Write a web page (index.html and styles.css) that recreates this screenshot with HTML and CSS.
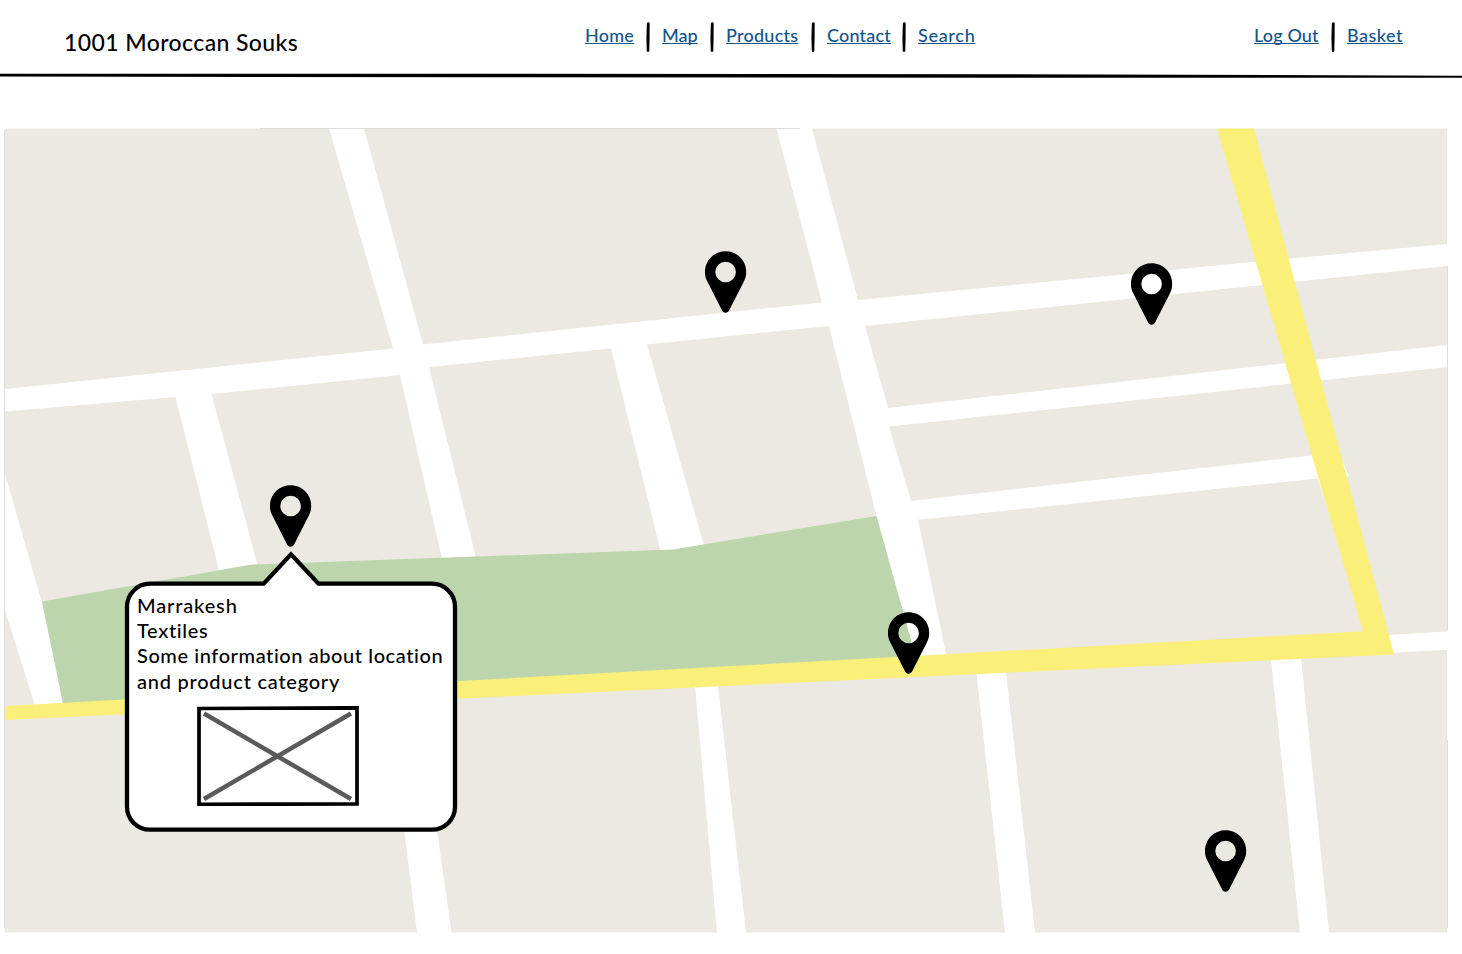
FILE: index.html
```html
<!DOCTYPE html>
<html lang="en">
<head>
<meta charset="utf-8">
<title>1001 Moroccan Souks</title>
<link rel="stylesheet" href="styles.css">
</head>
<body>
<svg class="defs" aria-hidden="true">
  <symbol id="pin" viewBox="0 0 42 62">
    <path fill-rule="evenodd" d="M21 .3C9.500.3.3 9.500.3 21c0 3.500.8 6.400 2.300 9.300L17 58.500C18 60.700 19.200 61.800 21 61.800s3-1.100 4-3.300L39.400 30.300C40.900 27.400 41.700 24.500 41.700 21 41.700 9.500 32.500.3 21 .3zM21 10.700a10.300 10.300 0 1 1 0 20.600 10.300 10.300 0 0 1 0-20.600z"/>
  </symbol>
  <symbol id="bar" viewBox="0 0 4 30">
    <path d="M.9.9Q2.400-.4 3.700.9L3.600 15 3.300 29.200Q2 30.500.8 29.300L.4 15z"/>
  </symbol>
</svg>

<header class="header">
  <h1 class="brand">1001 Moroccan Souks</h1>
  <nav class="nav nav-main">
    <a class="home" href="#">Home</a><svg class="bar"><use href="#bar"/></svg>
    <a class="map-link" href="#">Map</a><svg class="bar"><use href="#bar"/></svg>
    <a class="products" href="#">Products</a><svg class="bar"><use href="#bar"/></svg>
    <a class="contact" href="#">Contact</a><svg class="bar"><use href="#bar"/></svg>
    <a class="search" href="#">Search</a>
  </nav>
  <nav class="nav nav-user">
    <a class="logout" href="#">Log Out</a><svg class="bar"><use href="#bar"/></svg>
    <a class="basket" href="#">Basket</a>
  </nav>
</header>
<svg class="rule" viewBox="0 0 1462 6"><path d="M0 .7L500 .8 1000 1.200 1462 2.700V4.800L1000 4.700 500 4.300 0 3.500z"/></svg>

<main class="map">
  <svg class="streets" viewBox="4 128 1444 805">
    <g class="blocks">
      <path d="M5 128.500H329L393 348.500 5 389z"/>
      <path d="M364 128.500H776.500L822 302.500 423 344.500z"/>
      <path d="M812 128.500H1447V244L1258 261.500 858 300z"/>
      <path d="M5 411.500L175.500 397 219 570 42 603 5 474z"/>
      <path d="M211.500 394L400 375 442 559 258 567z"/>
      <path d="M429 367L611 348.500 660.500 551 476 558z"/>
      <path d="M647 344.500L829 326 877 518 704 546z"/>
      <path d="M865 326L1447 266V345L888 408z"/>
      <path d="M889 426.500L1447 367V631.500L1388 635 1346 477 1349 476 1343 463 1312 455.500 911 501z"/>
      <path d="M918 519.700L1318 478.500 1366 633 946.500 656z"/>
      <path d="M5 610L35 706 5 708z"/>
      <path d="M5 718L388 700 417 932.500H5z"/>
      <path d="M424 698L695 686 717 932.500H451.500L437.300 832z"/>
      <path d="M718 686L976.500 673 1005 932.500H746z"/>
      <path d="M1006 672L1271 659 1300 932.500H1035z"/>
      <path d="M1301 658L1394 652.500 1447 650V932.500H1329z"/>
    </g>
    <path class="park" d="M42 601.500L250 564.700 673 549.500 876.500 516 911 640 915 660 63 704z"/>
    <path class="avenue" d="M1217 128.500H1254L1394 654.500 5 720V706L1363 631.300z"/>
    <path class="edge" d="M4.500 130V928M260 128.500H800M1447.500 266V630M1447.500 740V928"/>
  </svg>
  <svg class="pin pin-marrakesh"><use href="#pin"/></svg>
  <svg class="pin pin-center"><use href="#pin"/></svg>
  <svg class="pin pin-east"><use href="#pin"/></svg>
  <svg class="pin pin-park"><use href="#pin"/></svg>
  <svg class="pin pin-south"><use href="#pin"/></svg>

  <section class="popup">
    <svg class="bubble" viewBox="0 0 334 284"><path d="M26 33.700H139.700L167 4.300 194.500 33.700H308A23 23 0 0 1 331 56.700V256.700A23 23 0 0 1 308 279.700H26A23 23 0 0 1 3 256.700V56.700A23 23 0 0 1 26 33.700z"/></svg>
    <div class="content">
      <p class="place">Marrakesh</p>
      <p class="category">Textiles</p>
      <p class="info">Some information about location</p>
      <p class="info-more">and product category</p>
      <svg class="picture" viewBox="0 0 162 100">
        <path class="frame" d="M2 2.500L160 1.800V98L2 98.300z"/>
        <path class="cross" d="M7 7.500L154 93M154 7.500L7 93"/>
      </svg>
    </div>
  </section>
</main>
</body>
</html>
```
FILE: styles.css
```css
* { box-sizing: border-box; }
body {
  margin: 0;
  background: #fff;
  color: #000;
  font-family: Lato, "Noto Sans", sans-serif;
  font-weight: 500;
  font-variant-ligatures: none;
  overflow: hidden;
}
.defs { position: absolute; width: 0; height: 0; }
.header {
  display: grid;
  grid-template-columns: 585px 669px 1fr;
  height: 73px;
}
.brand {
  margin: 27px 0 0 64px;
  font-size: 23px;
  line-height: 30px;
  font-weight: 500;
  letter-spacing: .4px;
  white-space: nowrap;
}
.nav {
  display: flex;
  align-items: center;
  height: 30px;
  margin-top: 22px;
}
.nav a {
  padding-bottom: 3px;
  color: #12548c;
  font-size: 18px;
  line-height: 27px;
  text-decoration-thickness: 1px;
  text-underline-offset: 1px;
  text-decoration-skip-ink: none;
  white-space: nowrap;
}
.bar { width: 4px; height: 30px; margin: 0 12px; flex: none; }
.nav .home { width: 49px; letter-spacing: .25px; }
.nav .map-link { width: 36px; }
.nav .products { width: 73px; letter-spacing: .25px; }
.nav .contact { width: 63px; letter-spacing: .2px; }
.nav .search { width: 58px; letter-spacing: .7px; }
.nav .logout { width: 65px; letter-spacing: .15px; }
.nav .basket { width: 57px; letter-spacing: .5px; }
.rule { display: block; width: 1462px; height: 6px; }
.map {
  position: relative;
  width: 1444px;
  height: 805px;
  margin: 49px 0 0 4px;
}
.streets { display: block; width: 1444px; height: 805px; }
.blocks { fill: #ece9e2; }
.park { fill: #bcd5ac; }
.avenue { fill: #faef79; }
.edge { fill: none; stroke: #d0cec9; stroke-width: .7; }
.pin { position: absolute; width: 42px; height: 62px; }
.pin-marrakesh { left: 265.500px; top: 357px; }
.pin-center { left: 700.500px; top: 123px; }
.pin-east { left: 1126.500px; top: 135px; }
.pin-park { left: 883.500px; top: 484px; }
.pin-south { left: 1200.500px; top: 702px; }
.pin use { transform: translateX(-.4px); }
.popup {
  position: absolute;
  left: 120px;
  top: 422px;
  width: 334px;
  height: 284px;
}
.bubble { position: absolute; inset: 0; width: 334px; height: 284px; }
.bubble path { fill: #fff; stroke: #000; stroke-width: 4.300; }
.content { position: relative; padding: 43px 0 0 13px; }
.content p {
  margin: 0;
  font-size: 20px;
  line-height: 25.200px;
  white-space: nowrap;
}
.content .place { letter-spacing: .85px; }
.content .category { letter-spacing: .65px; }
.content .info { letter-spacing: .58px; }
.content .info-more { letter-spacing: .76px; }
.picture { display: block; width: 162px; height: 100px; margin: 12.400px 0 0 60px; }
.frame { fill: #fff; stroke: #000; stroke-width: 3.700; }
.cross { fill: none; stroke: #5a5a5a; stroke-width: 4.500; }
```
